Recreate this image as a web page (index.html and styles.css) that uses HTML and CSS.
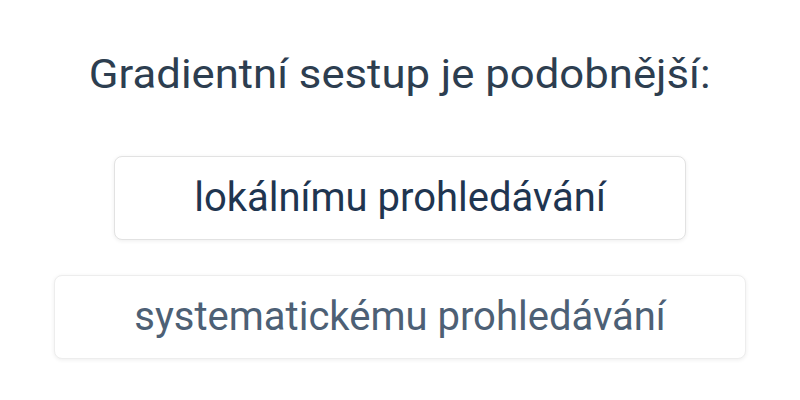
FILE: index.html
```html
<!DOCTYPE html>
<html>
<head>
<meta charset="utf-8">
<link rel="stylesheet" href="styles.css">
</head>
<body>
<div class="quiz">
  <h1 class="question">Gradientní sestup je podobnější:</h1>
  <div class="options">
    <button class="option">lokálnímu prohledávání</button>
    <button class="option option-faded">systematickému prohledávání</button>
  </div>
</div>
</body>
</html>
```
FILE: styles.css
```css
html, body {
  margin: 0;
  padding: 0;
  background: #ffffff;
}
body {
  width: 800px;
  height: 400px;
  font-family: Roboto, "Noto Sans", sans-serif;
}
.quiz {
  display: flex;
  flex-direction: column;
  align-items: center;
  padding-top: 51px;
}
.question {
  margin: 0;
  font-size: 40px;
  font-weight: 400;
  line-height: 48px;
  color: #2d3e50;
  transform: scaleX(1.092);
}
.options {
  display: flex;
  flex-direction: column;
  align-items: center;
  gap: 35px;
  margin-top: 57px;
}
.option {
  font-family: Roboto, "Noto Sans", sans-serif;
  font-size: 40px;
  line-height: 48px;
  padding: 17px 79px;
  background: #ffffff;
  border: 1px solid #e2e2e2;
  border-radius: 8px;
  box-shadow: 0 1px 4px rgba(0,0,0,0.07);
  color: #1f3550;
}
.option-faded {
  color: #4d6075;
  border-color: #ededed;
}
```
